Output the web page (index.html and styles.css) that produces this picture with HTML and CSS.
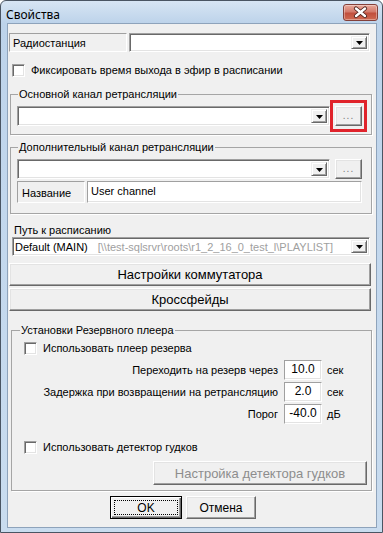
FILE: index.html
```html
<!DOCTYPE html>
<html>
<head>
<meta charset="utf-8">
<link rel="stylesheet" href="styles.css">
</head>
<body>
<div class="window">
  <div class="titlebar">
    <span class="title">Свойства</span>
    <div class="close">
      <svg width="35" height="17" viewBox="0 0 35 17">
        <path d="M13 4.5 L22 12 M22 4.5 L13 12" stroke="#4a1f1a" stroke-width="4.2" stroke-linecap="round" fill="none"/>
        <path d="M13 4.5 L22 12 M22 4.5 L13 12" stroke="#fff" stroke-width="2.4" stroke-linecap="round" fill="none"/>
      </svg>
    </div>
  </div>
  <div class="client">
    <div class="row-radio">
      <div class="static w-radio">Радиостанция</div>
      <div class="combo sunken grow"><span class="ctext"></span><span class="drop"><svg width="7" height="4" viewBox="0 0 7 4"><polygon points="0,0 7,0 3.5,4" fill="#000"/></svg></span></div>
    </div>
    <label class="check-row top-check">
      <span class="cbox"></span><span>Фиксировать время выхода в эфир в расписании</span>
    </label>

    <fieldset class="group g1">
      <legend>Основной канал ретрансляции</legend>
      <div class="chan-row">
        <div class="combo sunken grow"><span class="ctext"></span><span class="drop"><svg width="7" height="4" viewBox="0 0 7 4"><polygon points="0,0 7,0 3.5,4" fill="#000"/></svg></span></div>
        <div class="dots-wrap">
          <div class="btn dots">...</div>
          <div class="highlight"></div>
        </div>
      </div>
    </fieldset>

    <fieldset class="group g2">
      <legend>Дополнительный канал ретрансляции</legend>
      <div class="chan-row">
        <div class="combo sunken grow"><span class="ctext"></span><span class="drop"><svg width="7" height="4" viewBox="0 0 7 4"><polygon points="0,0 7,0 3.5,4" fill="#000"/></svg></span></div>
        <div class="dots-wrap">
          <div class="btn dots">...</div>
        </div>
      </div>
      <div class="name-row">
        <div class="static w-name">Название</div>
        <div class="edit grow name-edit">User channel</div>
      </div>
    </fieldset>

    <div class="path-label">Путь к расписанию</div>
    <div class="combo sunken path-combo"><span class="ctext">Default (MAIN)<span class="muted">[\\test-sqlsrvr\roots\r1_2_16_0_test_l\PLAYLIST]</span></span><span class="drop"><svg width="7" height="4" viewBox="0 0 7 4"><polygon points="0,0 7,0 3.5,4" fill="#000"/></svg></span></div>

    <div class="btn wide first">Настройки коммутатора</div>
    <div class="btn wide second">Кроссфейды</div>

    <fieldset class="group g3">
      <legend>Установки Резервного плеера</legend>
      <label class="check-row g3-check">
        <span class="cbox"></span><span>Использовать плеер резерва</span>
      </label>
      <div class="param-list">
        <div class="param"><span class="plabel">Переходить на резерв через</span><span class="edit num">10.0</span><span class="unit">сек</span></div>
        <div class="param"><span class="plabel">Задержка при возвращении на ретрансляцию</span><span class="edit num">2.0</span><span class="unit">сек</span></div>
        <div class="param"><span class="plabel">Порог</span><span class="edit num">-40.0</span><span class="unit">дБ</span></div>
      </div>
      <label class="check-row g3-check2">
        <span class="cbox"></span><span>Использовать детектор гудков</span>
      </label>
      <div class="btn detector">Настройка детектора гудков</div>
    </fieldset>

    <div class="footer">
      <div class="btn default-btn"><span class="focus">OK</span></div>
      <div class="btn cancel">Отмена</div>
    </div>
  </div>
</div>
</body>
</html>
```

FILE: styles.css
```css
* { box-sizing: border-box; }

body {
  margin: 0;
  font-family: "Liberation Sans", Arial, sans-serif;
  font-size: 11px;
  color: #000;
  background: #fff;
}

.window {
  width: 383px;
  height: 533px;
  border: 1px solid #4a5563;
  border-radius: 6px 6px 0 0;
  background: linear-gradient(#d7e5f4, #bdd3ea 22px, #c2d7ed 200px, #c9dcef);
  display: flex;
  flex-direction: column;
  overflow: hidden;
}

.titlebar {
  height: 22px;
  display: flex;
  align-items: flex-start;
  flex: none;
}

.title {
  font-family: "Noto Sans", "Open Sans", sans-serif;
  font-size: 12px;
  line-height: 14px;
  margin: 7px 0 0 5px;
  color: #000;
}

.close {
  margin: 3px 4px 0 auto;
  width: 35px;
  height: 17px;
  border: 1px solid #83403a;
  border-radius: 3px;
  background: linear-gradient(#e9a99b, #d37a6b 45%, #c14f3d 55%, #cf6a52);
  box-shadow: inset 0 0 0 1px rgba(255,255,255,0.35);
  display: flex;
}
.close svg { display: block; margin: -1px; }

.client {
  margin: 0 5px 4px 6px;
  border: 1px solid #8ea3bb;
  background: #f0f0f0;
  flex: 1;
  display: flex;
  flex-direction: column;
}

.grow { flex: 1; min-width: 0; }

/* common controls */
.sunken {
  background: #fff;
  border: 1px solid;
  border-color: #a0a0a0 #fff #fff #a0a0a0;
  box-shadow: inset 1px 1px 0 #696969, inset -1px -1px 0 #e3e3e3;
}

.static {
  border: 1px solid;
  border-color: #a0a0a0 #fff #fff #a0a0a0;
  background: #f0f0f0;
  display: flex;
  align-items: center;
  padding-left: 3px;
}

.edit {
  background: #fff;
  border: 1px solid;
  border-color: #a0a0a0 #fff #fff #a0a0a0;
  box-shadow: inset -1px -1px 0 #e3e3e3;
}

.combo {
  display: flex;
  align-items: center;
  padding: 2px;
}
.ctext {
  flex: 1;
  padding-left: 1px;
  white-space: nowrap;
  overflow: hidden;
}
.muted { color: #a0a0a0; margin-left: 10px; }

.drop {
  width: 16px;
  height: 100%;
  background: #f0f0f0;
  border: 1px solid;
  border-color: #f0f0f0 #696969 #696969 #f0f0f0;
  box-shadow: inset 1px 1px 0 #fff, inset -1px -1px 0 #a0a0a0;
  display: flex;
  align-items: center;
  justify-content: center;
  flex: none;
}
.drop svg { display: block; margin-top: 1px; }

.btn {
  background: #f0f0f0;
  border: 1px solid;
  border-color: #fff #696969 #696969 #fff;
  box-shadow: inset -1px -1px 0 #a0a0a0, inset 1px 1px 0 #e3e3e3;
  display: flex;
  align-items: center;
  justify-content: center;
}

.cbox {
  width: 13px;
  height: 13px;
  background: #fff;
  border: 1px solid;
  border-color: #a0a0a0 #fff #fff #a0a0a0;
  box-shadow: inset 1px 1px 0 #696969, inset -1px -1px 0 #e3e3e3;
  flex: none;
  margin-right: 6px;
}

.check-row {
  display: flex;
  align-items: center;
  height: 14px;
  line-height: 14px;
}

/* top rows */
.row-radio {
  display: flex;
  gap: 2px;
  height: 19px;
  margin: 9px 6px 0 1px;
}
.w-radio { width: 118px; flex: none; }

.top-check { margin: 11px 0 0 4px; }

/* group boxes */
.group {
  border: 1px solid #a5a5a5;
  box-shadow: 1px 1px 0 #fff;
  margin: 0 4px 0 2px;
  padding: 5px 9px 8px 6px;
  min-width: 0;
}
.group legend {
  padding: 0 1px;
  margin-left: 1px;
  line-height: 13px;
  font-size: 11px;
}
.g1 { margin-top: 11px; }
.g2 { margin-top: 6px; padding-bottom: 10px; }

.chan-row {
  display: flex;
  gap: 5px;
  height: 20px;
}
.dots-wrap {
  position: relative;
  width: 27px;
  flex: none;
}
.dots {
  height: 100%;
  color: #7a7a7a;
  font-size: 10px;
  align-items: flex-end;
  padding-bottom: 4px;
  letter-spacing: 1px;
}
.highlight {
  position: absolute;
  left: -5px;
  right: -5px;
  top: -6px;
  bottom: -6px;
  border: 3px solid #e0232b;
}

.name-row {
  display: flex;
  gap: 2px;
  height: 22px;
  margin-top: 2px;
}
.w-name { width: 68px; flex: none; padding-left: 4px; padding-top: 2px; }
.name-edit { padding: 2px 3px; line-height: 14px; }

/* schedule path */
.path-label {
  margin: 9px 0 0 6px;
  line-height: 14px;
}
.path-combo {
  height: 19px;
  margin: 0 6px 0 4px;
  padding-left: 1px;
}

.wide {
  height: 23px;
  margin: 0 5px 0 1px;
  font-size: 13px;
}
.first { margin-top: 7px; }
.second { margin-top: 2px; }

/* reserve player group */
.g3 {
  margin: 13px 4px 0 3px;
  padding: 4px 4px 5px 6px;
  display: flex;
  flex-direction: column;
}
.g3 legend { margin-left: 2px; }
.g3-check { margin-left: 6px; }

.param-list {
  display: flex;
  flex-direction: column;
  gap: 2px;
  margin-top: 5px;
}
.param {
  display: flex;
  align-items: center;
  height: 20px;
}
.plabel { flex: 1; text-align: right; margin-right: 6px; }
.num {
  width: 38px;
  height: 20px;
  flex: none;
  text-align: center;
  font-size: 12px;
  line-height: 16px;
}
.unit { width: 40px; margin-left: 5px; flex: none; }

.g3-check2 { margin: 16px 0 0 6px; }

.detector {
  width: 214px;
  height: 24px;
  margin: 7px 0 0 auto;
  color: #8d8d8d;
  font-size: 13px;
}

/* footer */
.footer {
  display: flex;
  gap: 4px;
  margin: 5px 0 0 102px;
}
.default-btn {
  width: 72px;
  height: 23px;
  border: 1px solid #000;
  box-shadow: inset 1px 1px 0 #fff, inset -1px -1px 0 #696969, inset -2px -2px 0 #a0a0a0;
  padding: 3px;
}
.focus {
  flex: 1;
  align-self: stretch;
  border: 1px dotted #000;
  display: flex;
  align-items: center;
  justify-content: center;
  font-size: 12px;
}
.cancel {
  width: 70px;
  height: 23px;
  font-size: 12px;
}
```
